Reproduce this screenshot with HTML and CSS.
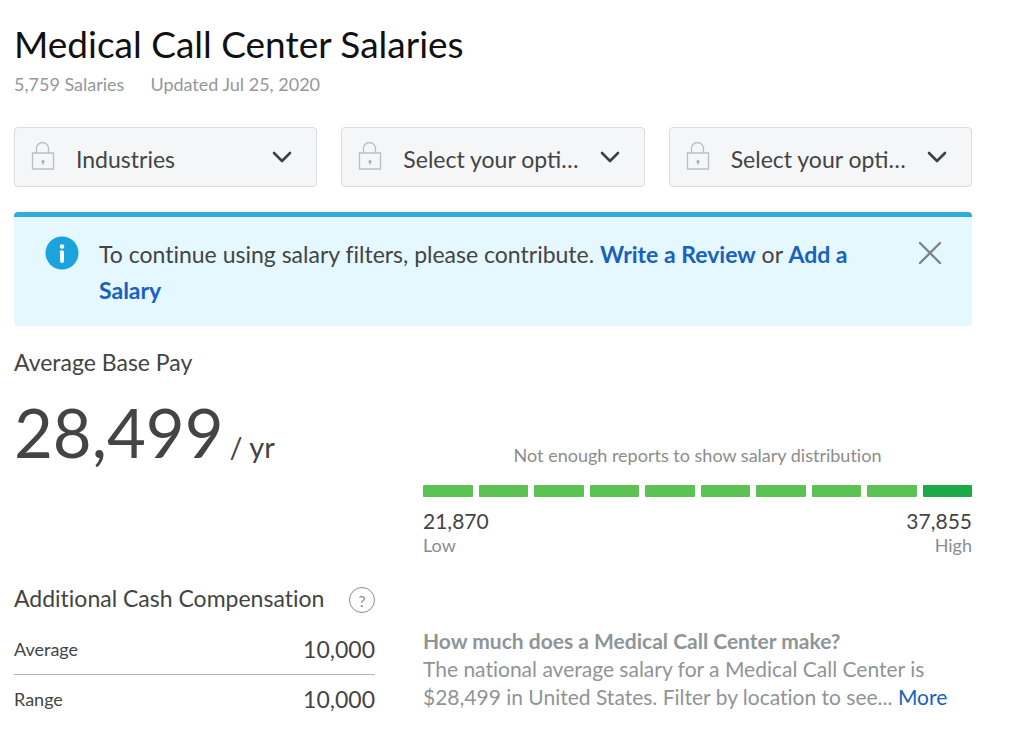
FILE: index.html
```html
<!DOCTYPE html>
<html lang="en">
<head>
  <meta charset="UTF-8">
  <meta name="viewport" content="width=device-width, initial-scale=1.0">
  <title>Medical Call Center Salaries</title>
  <link rel="stylesheet" href="styles.css">
</head>

<body>

  <!-- Shared icons -->
  <svg class="sprite" aria-hidden="true">
    <symbol id="icon-lock" viewBox="0 0 24 30">
      <path d="M5.5 12V7.5a6 6 0 0 1 12 0V12M1.5 12h21v16h-21z" fill="none" stroke="#bcbec0" stroke-width="1.3"/>
      <circle cx="12" cy="20.5" r="1.5" fill="#a5a8aa"/>
      <path d="M12 20.5v3" stroke="#a5a8aa" stroke-width="1.2"/>
    </symbol>
    <symbol id="icon-chevron" viewBox="0 0 20 14">
      <path d="M2 3l8 8 8-8" fill="none" stroke="#404040" stroke-width="2.6" stroke-linecap="round" stroke-linejoin="round"/>
    </symbol>
  </svg>

  <main class="container">
    <header>
      <h1>Medical Call Center Salaries</h1>
      <p class="meta"><span>5,759 Salaries</span><span>Updated Jul 25, 2020</span></p>
    </header>

    <form class="filters">
      <div class="filter">
        <svg class="lock"><use href="#icon-lock"/></svg>
        <select aria-label="Industries">
          <option>Industries</option>
        </select>
        <svg class="chevron"><use href="#icon-chevron"/></svg>
      </div>
      <div class="filter">
        <svg class="lock"><use href="#icon-lock"/></svg>
        <select aria-label="Company size">
          <option>Select your option</option>
        </select>
        <svg class="chevron"><use href="#icon-chevron"/></svg>
      </div>
      <div class="filter">
        <svg class="lock"><use href="#icon-lock"/></svg>
        <select aria-label="Years of experience">
          <option>Select your option</option>
        </select>
        <svg class="chevron"><use href="#icon-chevron"/></svg>
      </div>
    </form>

    <div class="notice">
      <svg class="info" viewBox="0 0 34 34" aria-hidden="true">
        <circle cx="17" cy="17" r="16.5" fill="#1ba3dd"/>
        <circle cx="17" cy="10.5" r="2.3" fill="#fff"/>
        <path d="M15.6 15.8H17v9" fill="none" stroke="#fff" stroke-width="2" stroke-linecap="round"/>
        <path d="M17 16.2v8.8" stroke="#fff" stroke-width="4" stroke-linecap="round"/>
      </svg>
      <p>To continue using salary filters, please contribute. <a href="#">Write a Review</a> or <a href="#">Add a Salary</a></p>
      <button type="button" class="close" aria-label="Close">
        <svg viewBox="0 0 24 24"><path d="M2 2l20 20M22 2L2 22" stroke="#7f8589" stroke-width="2.4" stroke-linecap="round"/></svg>
      </button>
    </div>

    <div class="summary">
      <section class="base-pay">
        <h2>Average Base Pay</h2>
        <p class="amount">28,499<span>/ yr</span></p>
      </section>

      <section class="distribution">
        <p class="note">Not enough reports to show salary distribution</p>
        <div class="bars">
          <i></i><i></i><i></i><i></i><i></i><i></i><i></i><i></i><i></i><i></i>
        </div>
        <div class="range">
          <div><strong>21,870</strong><span>Low</span></div>
          <div class="high"><strong>37,855</strong><span>High</span></div>
        </div>
      </section>

      <section class="compensation">
        <div class="heading">
          <h2>Additional Cash Compensation</h2>
          <button type="button" class="help" aria-label="About cash compensation">?</button>
        </div>
        <table>
          <tr><th scope="row">Average</th><td>10,000</td></tr>
          <tr><th scope="row">Range</th><td>10,000</td></tr>
        </table>
      </section>

      <section class="about">
        <h3>How much does a Medical Call Center make?</h3>
        <p>The national average salary for a Medical Call Center is $28,499 in United States. Filter by location to see... <a href="#">More</a></p>
      </section>
    </div>
  </main>

</body>
</html>
```
FILE: styles.css
```css
/* General Reset */
* {
  margin: 0;
  padding: 0;
  box-sizing: border-box;
}

body {
  font-family: Lato, sans-serif;
  font-variant-ligatures: none;
  background: #fff;
  color: #444;
}

a {
  color: #1861bf;
  text-decoration: none;
}

a:hover {
  text-decoration: underline;
}

button {
  background: none;
  border: none;
  cursor: pointer;
}

.sprite {
  display: none;
}

.container {
  padding: 19px 52px 12px 14px;
}

/* Title */
h1 {
  font-size: 37px;
  line-height: 50px;
  font-weight: 400;
  color: #111;
}

.meta {
  display: flex;
  gap: 26px;
  margin-top: 3px;
  font-size: 18px;
  line-height: 24px;
  color: #94989b;
}

/* Filters */
.filters {
  display: grid;
  grid-template-columns: repeat(3, minmax(0, 1fr));
  gap: 24px;
  margin-top: 31px;
}

.filter {
  display: flex;
  align-items: center;
  height: 60px;
  padding: 0 24px 2px 16px;
  background: #f4f6f8;
  border: 1px solid #dadddf;
  border-radius: 4px;
}

.filter select {
  flex: 1;
  min-width: 0;
  height: 36px;
  margin: 6px 18px 0 21px;
  appearance: none;
  background: none;
  border: none;
  font: 23px Lato, sans-serif;
  color: #444;
  text-overflow: ellipsis;
  overflow: hidden;
  white-space: nowrap;
}

.lock {
  flex: none;
  width: 24px;
  height: 30px;
}

.chevron {
  flex: none;
  width: 20px;
  height: 14px;
  margin-top: 2px;
}

/* Contribute notice */
.notice {
  display: flex;
  align-items: flex-start;
  margin-top: 25px;
  padding: 19px 30px 18px 31px;
  background: #e5f7ff;
  border-top: 5px solid #30addc;
  border-radius: 4px;
  font-size: 23px;
  line-height: 36px;
}

.notice p {
  flex: 1;
  margin: 0 64px 0 20px;
}

.notice a {
  font-weight: 700;
}

.info {
  flex: none;
  width: 34px;
  height: 34px;
}

.close svg {
  display: block;
  width: 24px;
  height: 24px;
  margin-top: 5px;
}

/* Salary summary */
.summary {
  display: grid;
  grid-template-columns: 361fr 549fr;
  column-gap: 48px;
  margin-top: 21px;
}

h2 {
  font-size: 23px;
  line-height: 30px;
  font-weight: 400;
}

.amount {
  margin-top: 11px;
  font-size: 67px;
  line-height: 88px;
}

.amount span {
  margin-left: 6px;
  font-size: 29px;
}

.distribution {
  padding-top: 96px;
}

.note {
  font-size: 18px;
  line-height: 24px;
  text-align: center;
  color: #8c8c8c;
}

.bars {
  display: flex;
  gap: 6px;
  margin-top: 18px;
}

.bars i {
  flex: 1;
  height: 12px;
  background: #5bc253;
  border-radius: 1px;
}

.bars i:last-child {
  background: #1ea948;
}

.range {
  display: flex;
  justify-content: space-between;
  margin-top: 10px;
}

.range strong {
  display: block;
  font-size: 21px;
  line-height: 27px;
  font-weight: 400;
}

.range span {
  display: block;
  font-size: 18px;
  line-height: 22px;
  color: #8c8c8c;
}

.high {
  text-align: right;
}

.compensation,
.about {
  margin-top: 27px;
}

.heading {
  display: flex;
  align-items: center;
  justify-content: space-between;
}

.help {
  width: 26px;
  height: 26px;
  margin-top: 4px;
  border: 1px solid #8c8c8c;
  border-radius: 50%;
  font: 16px Lato, sans-serif;
  color: #8c8c8c;
}

table {
  width: 100%;
  margin-top: 12px;
  border-collapse: collapse;
}

th {
  font-size: 18px;
  font-weight: 400;
  text-align: left;
}

td {
  font-size: 23px;
  text-align: right;
}

th,
td {
  height: 49px;
}

tr:first-child {
  border-bottom: 1px solid #b5b5b5;
}

.about {
  padding-top: 44px;
  font-size: 21px;
  line-height: 28px;
  color: #8f9497;
}

h3 {
  font-size: 21px;
  font-weight: 700;
}
```
